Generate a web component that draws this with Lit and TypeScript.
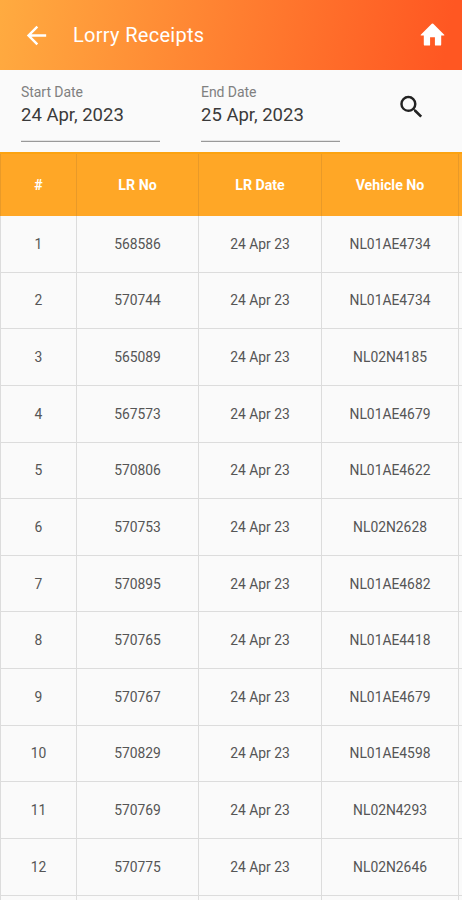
import { LitElement, html, css } from "lit";
import { customElement } from "lit/decorators.js";

const RECEIPTS: [string, string][] = [
  ["568586", "NL01AE4734"],
  ["570744", "NL01AE4734"],
  ["565089", "NL02N4185"],
  ["567573", "NL01AE4679"],
  ["570806", "NL01AE4622"],
  ["570753", "NL02N2628"],
  ["570895", "NL01AE4682"],
  ["570765", "NL01AE4418"],
  ["570767", "NL01AE4679"],
  ["570829", "NL01AE4598"],
  ["570769", "NL02N4293"],
  ["570775", "NL02N2646"],
];

@customElement("app-root")
export class AppRoot extends LitElement {
  static styles = css`
    :host {
      display: flex;
      flex-direction: column;
      height: 900px;
      overflow: hidden;
      background: #fafafa;
      font-family: Roboto, sans-serif;
      color: #3a3a3a;
    }
    * { box-sizing: border-box; }
    svg { display: block; fill: currentColor; }
    .bar {
      flex: none;
      height: 70px;
      padding: 0 15px 0 22px;
      display: flex;
      align-items: center;
      color: #fff;
      background: linear-gradient(100deg, #ffab40, #ff5722 96%);
    }
    .title {
      flex: 1;
      margin-left: 22px;
      font-size: 20px;
      line-height: 24px;
      letter-spacing: 0.3px;
    }
    .home { margin-bottom: 2px; }
    .filters {
      flex: none;
      height: 82px;
      padding: 14px 35px 0 21px;
      display: flex;
    }
    .field {
      width: 139px;
      height: 58px;
      margin-right: 41px;
      border-bottom: 1px solid #999;
      box-shadow: 0 -1px 0 #e4e4e4 inset;
    }
    .label {
      font-size: 14px;
      line-height: 16px;
      letter-spacing: -0.05px;
      color: #808080;
    }
    .value {
      margin-top: 4px;
      font-size: 18.5px;
      line-height: 22px;
    }
    .search { margin: 8px 0 0 auto; color: #222; }
    .row {
      flex: none;
      display: grid;
      grid-template-columns: 76px 122px 123px 137px 1fr;
      height: 56.64px;
      border-bottom: 1px solid #dcdcdc;
      font-size: 13.85px;
      color: #555;
    }
    .cell {
      display: flex;
      align-items: center;
      justify-content: center;
      border-left: 1px solid #dcdcdc;
    }
    .head {
      height: 64px;
      border-bottom: 0;
      border-top: 2px solid #fca311;
      background: #ffa726;
      color: #fff;
      font-size: 14.2px;
      font-weight: 700;
    }
    .head .cell { border-color: #e99a28; }
  `;

  private field(label: string, value: string) {
    return html`<div class="field">
      <div class="label">${label}</div>
      <div class="value">${value}</div>
    </div>`;
  }

  private row(cells: string[], head = false) {
    return html`<div class="row ${head ? "head" : ""}">
      ${[...cells, ""].map((c) => html`<div class="cell">${c}</div>`)}
    </div>`;
  }

  render() {
    return html`
      <header class="bar">
        <svg width="29" height="29" viewBox="0 0 24 24">
          <path d="M20 11H7.83l5.59-5.59L12 4l-8 8 8 8 1.41-1.41L7.83 13H20v-2z" />
        </svg>
        <div class="title">Lorry Receipts</div>
        <svg class="home" width="29" height="29" viewBox="0 0 24 24">
          <path d="M10 20.6v-6.400h4v6.400q0 .6.6.6H18.200q1 0 1-1V12.800h2.200q.9 0 .3-.6L12.600 3.200q-.6-.5-1.200 0L2.300 12.200q-.6.6.3.6H4.800v7.400q0 1 1 1H9.400q.6 0 .6-.6z" />
        </svg>
      </header>
      <section class="filters">
        ${this.field("Start Date", "24 Apr, 2023")}
        ${this.field("End Date", "25 Apr, 2023")}
        <svg class="search" width="31" height="30" viewBox="0 0 24 24">
          <path d="M15.5 14h-.79l-.28-.27A6.471 6.471 0 0 0 16 9.5 6.5 6.5 0 1 0 9.5 16c1.61 0 3.09-.59 4.23-1.57l.27.28v.79l5 4.99L20.49 19l-4.99-5zm-6 0C7.01 14 5 11.99 5 9.5S7.01 5 9.5 5 14 7.01 14 9.5 11.99 14 9.5 14z" />
        </svg>
      </section>
      ${this.row(["#", "LR No", "LR Date", "Vehicle No"], true)}
      ${RECEIPTS.map(([no, vehicle], i) => this.row([String(i + 1), no, "24 Apr 23", vehicle]))}
      ${this.row(["", "", "", ""])}
    `;
  }
}
